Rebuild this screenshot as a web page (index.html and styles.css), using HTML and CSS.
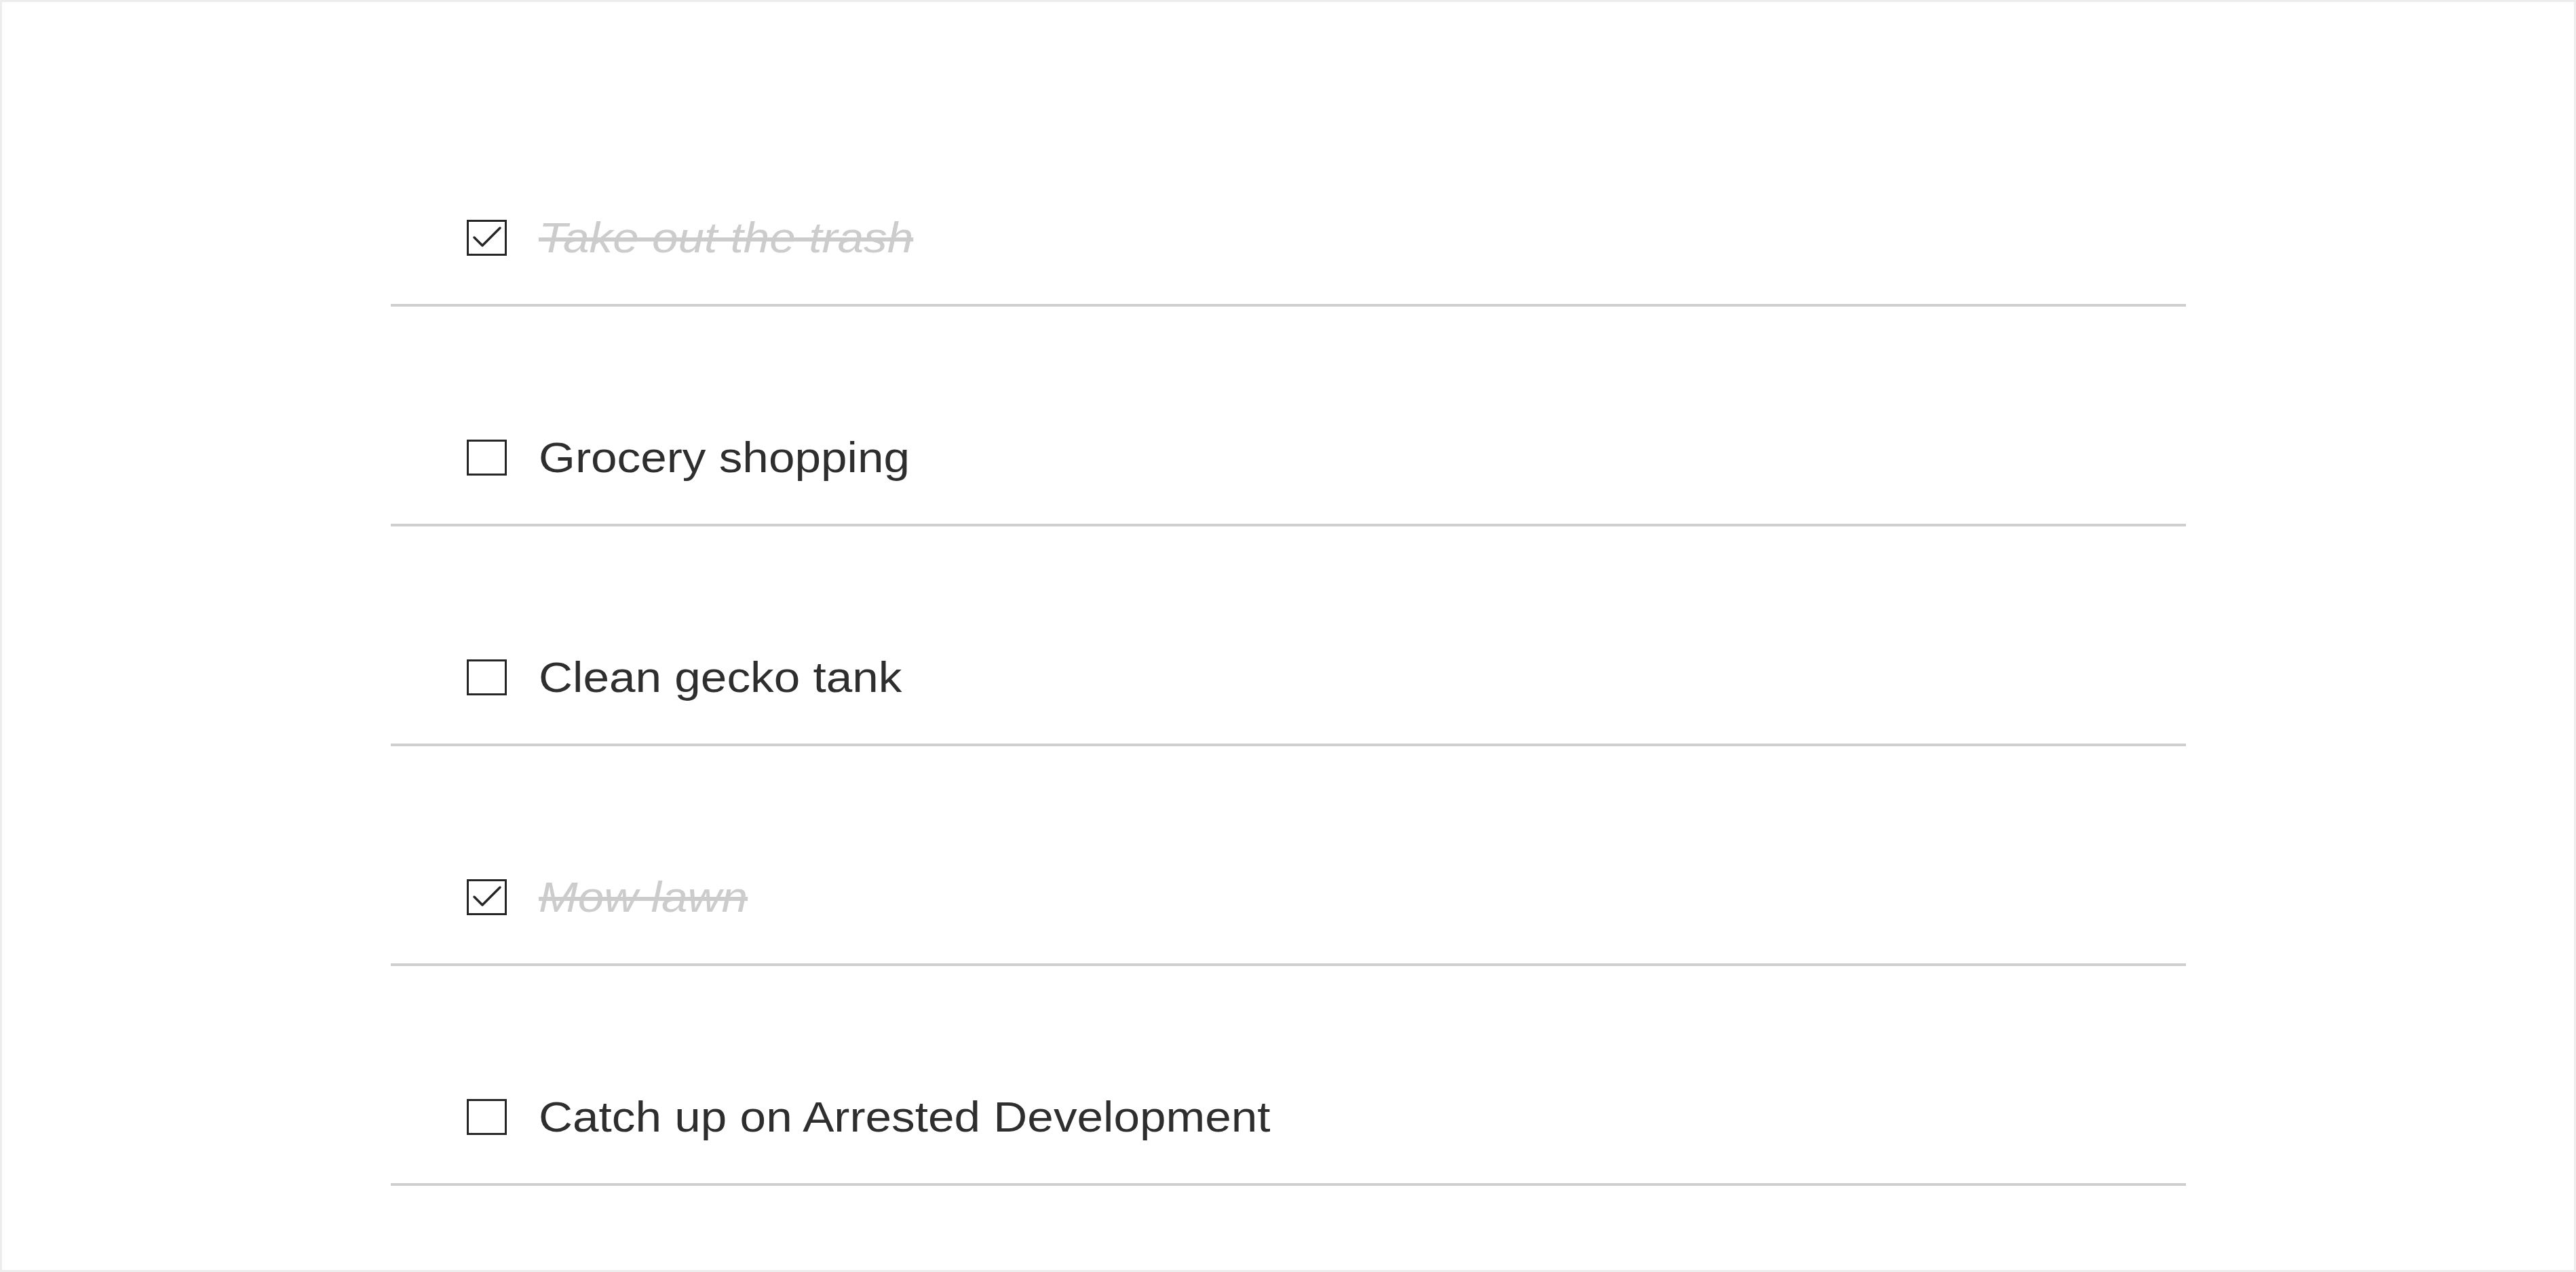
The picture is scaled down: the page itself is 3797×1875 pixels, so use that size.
FILE: index.html
```html
<!DOCTYPE html>
<html lang="en">
<head>
<meta charset="utf-8">
<title>Todo list</title>
<link rel="stylesheet" href="styles.css">
</head>
<body>
<div class="frame">
  <ul class="todo-list">
    <li class="todo done">
      <span class="box"><svg class="check" viewBox="0 0 53 47"><polyline points="8,23 20,35 46,9"/></svg></span>
      <span class="label">Take out the trash</span>
    </li>
    <li class="todo">
      <span class="box"></span>
      <span class="label">Grocery shopping</span>
    </li>
    <li class="todo">
      <span class="box"></span>
      <span class="label">Clean gecko tank</span>
    </li>
    <li class="todo done">
      <span class="box"><svg class="check" viewBox="0 0 53 47"><polyline points="8,23 20,35 46,9"/></svg></span>
      <span class="label">Mow lawn</span>
    </li>
    <li class="todo">
      <span class="box"></span>
      <span class="label">Catch up on Arrested Development</span>
    </li>
  </ul>
</div>
</body>
</html>
```

FILE: styles.css
```css
html, body {
  margin: 0;
  padding: 0;
  background: #ffffff;
}

.frame {
  box-sizing: border-box;
  height: 100vh;
  border: 3px solid #ededed;
  background: #ffffff;
  padding-top: 125px;
  font-family: "Liberation Sans", Arial, sans-serif;
}

.todo-list {
  list-style: none;
  margin: 0 auto;
  padding: 0;
  width: 2646px;
}

.todo {
  box-sizing: border-box;
  height: 324px;
  padding-top: 124px;
  padding-left: 112px;
  border-bottom: 4px solid #cfcfcf;
  display: flex;
  align-items: center;
}

.box {
  box-sizing: border-box;
  flex: 0 0 auto;
  width: 59px;
  height: 53px;
  border: 3px solid #262626;
  background: #ffffff;
  display: flex;
}

.check {
  width: 100%;
  height: 100%;
  fill: none;
  stroke: #262626;
  stroke-width: 3.5;
  stroke-linecap: round;
  stroke-linejoin: round;
}

.label {
  margin-left: 47px;
  font-size: 63px;
  color: #2e2e2e;
  white-space: nowrap;
  transform: scaleX(1.1);
  transform-origin: left center;
}

.done .label {
  color: #cccccc;
  font-style: italic;
  text-decoration: line-through;
  text-decoration-color: #cccccc;
}
```
